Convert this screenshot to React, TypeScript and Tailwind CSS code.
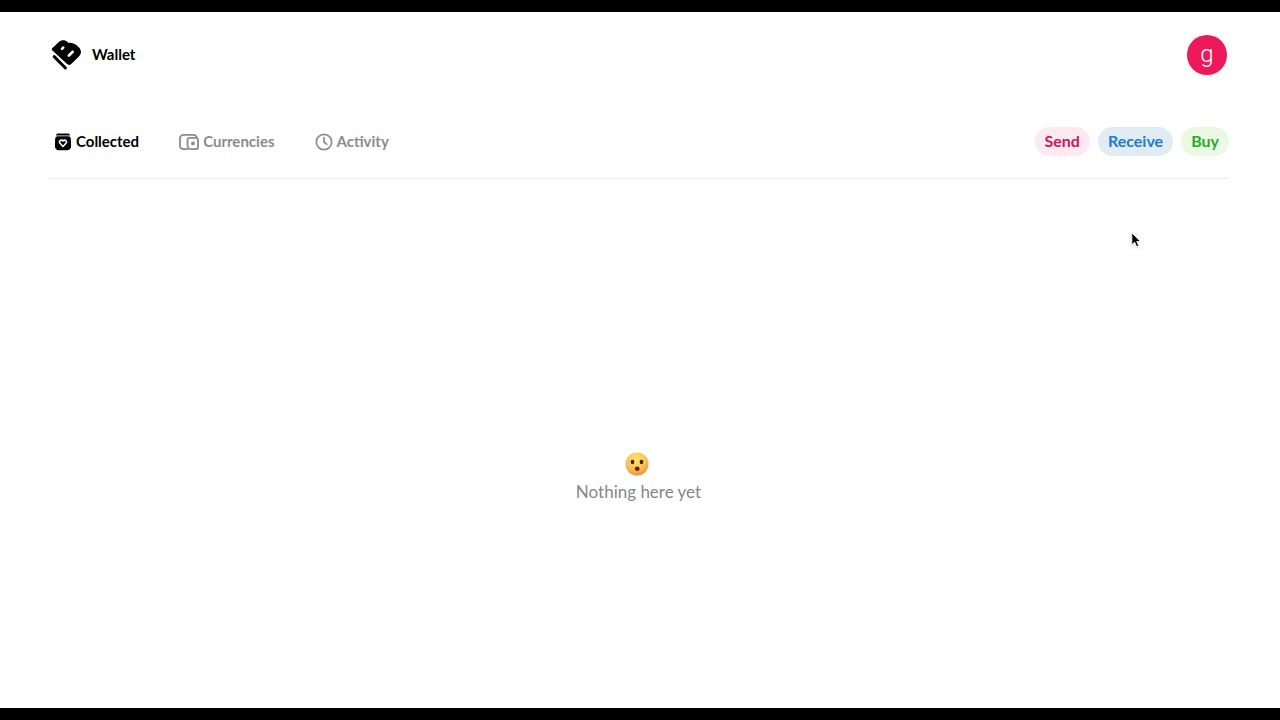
import React from "react";

function LogoMark() {
  return (
    <svg viewBox="0 0 36 36" className="size-9" aria-hidden="true">
      <path
        fill="#000"
        fillRule="evenodd"
        d="M4.2 11.200 L10.8 4.900 C13.4 2.700 17.200 2.700 19.600 5 L20.400 5.900 C22.800 5.200 25.800 6 28.600 8.200 L30.800 10.200 C33.600 13 33.700 16.600 31 19.400 L23.200 27 C21.800 28.300 20.200 28.200 18.800 26.800 L4.400 13.600 C3.600 12.800 3.600 11.900 4.200 11.200 Z M13.100 11 L14.400 9.700 C15.800 8.700 17.200 10.200 16.200 11.500 L14.900 12.800 C13.500 13.800 12.100 12.400 13.100 11 Z M19.900 17.600 L23.600 13.900 C25.100 12.700 26.700 14.300 25.600 15.800 L21.900 19.500 C20.400 20.700 18.700 19.100 19.900 17.600 Z"
      />
      <path d="M6.200 19.600 L17.400 31" stroke="#000" strokeWidth="3" strokeLinecap="round" fill="none" />
    </svg>
  );
}

function CollectedIcon() {
  return (
    <svg viewBox="0 0 18 18" className="size-[18px]" aria-hidden="true">
      <path fill="#000" d="M4.500.5h9c1.300 0 2 .5 2.300 1.400l.2.700H2l.2-.7C2.500 1 3.200.5 4.500.5Z" />
      <path fill="#000" d="M3.700 3.200h10.600a2.500 2.500 0 0 1 2.500 2.300l.3 7.300a4 4 0 0 1-4 4.400H4.900a4 4 0 0 1-4-4.400l.3-7.300a2.500 2.500 0 0 1 2.500-2.300Z" />
      <path
        d="M9 13.400 6 10.300C4.400 8.500 7 5.900 9 7.900c2-2 4.600.6 3 2.400L9 13.400Z"
        fill="none"
        stroke="#fff"
        strokeWidth="1.500"
        strokeLinejoin="round"
      />
    </svg>
  );
}

function CurrenciesIcon() {
  return (
    <svg viewBox="0 0 20 18" className="h-[18px] w-5" fill="none" stroke="#8a8c8e" strokeWidth="1.800" aria-hidden="true">
      <path d="M8.500 16.200h-4A3.500 3.500 0 0 1 1 12.700V5.300a3.500 3.500 0 0 1 3.500-3.500h10a3.500 3.500 0 0 1 3.300 2.700" strokeLinecap="round" />
      <path d="M10.500 4.800h6.200a2.300 2.300 0 0 1 2.300 2.300v6.800a2.300 2.300 0 0 1-2.300 2.300h-4.200a4 4 0 0 1-4-4V6.800a2 2 0 0 1 2-2Z" />
      <circle cx="14" cy="10.400" r="1.900" fill="#8a8c8e" stroke="none" />
    </svg>
  );
}

function ActivityIcon() {
  return (
    <svg viewBox="0 0 18 18" className="size-[18px]" fill="none" stroke="#8a8c8e" strokeWidth="1.700" strokeLinecap="round" strokeLinejoin="round" aria-hidden="true">
      <circle cx="9" cy="9" r="7.700" />
      <path d="M9 4.500V9l2.800 2.300" />
    </svg>
  );
}

function SurprisedFace() {
  return (
    <svg viewBox="0 0 24 24" className="mr-1 size-6" role="img" aria-label="Surprised face">
      <defs>
        <radialGradient id="face" cx="0.450" cy="0.300" r="0.750">
          <stop offset="0" stopColor="#ffe373" />
          <stop offset="0.550" stopColor="#fdc456" />
          <stop offset="1" stopColor="#f2873d" />
        </radialGradient>
      </defs>
      <circle cx="12" cy="12" r="11.500" fill="url(#face)" />
      <ellipse cx="7.500" cy="10" rx="1.800" ry="2.200" fill="#40240c" />
      <ellipse cx="16.500" cy="10" rx="1.800" ry="2.200" fill="#40240c" />
      <ellipse cx="12.200" cy="16.800" rx="2.400" ry="2.200" fill="#6b210b" />
    </svg>
  );
}

function Pointer() {
  return (
    <svg viewBox="0 0 12 18" className="pointer-events-none absolute top-[219px] left-[1130px] h-[18px] w-3 drop-shadow-sm" aria-hidden="true">
      <path d="M1.800 1.800v12l2.800-2.500 2 4.400 2.200-1-2-4.200h3.800Z" fill="#000" stroke="#fff" strokeWidth="0.900" />
    </svg>
  );
}

export default function App() {
  return (
    <div className="relative flex min-h-screen flex-col border-y-12 border-black bg-white pr-[51px] pl-12 font-['Lato',sans-serif] text-base leading-5">
      <header className="flex items-center justify-between pt-[23px]">
        <a href="#" className="flex items-center gap-2 text-[15px] font-bold text-black">
          <LogoMark />
          <span className="pb-0.5">Wallet</span>
        </a>
        <button type="button" aria-label="Account" className="mr-0.5 flex size-10 items-center justify-center rounded-full bg-[#ec1a5b] pb-0.5 font-['Roboto',sans-serif] text-2xl font-light text-white shadow-[0_0_12px_rgba(0,0,0,0.06)]">
          g
        </button>
      </header>

      <div className="mt-[52px] flex items-center justify-between border-b border-[#ececec] pb-[22px]">
        <nav className="flex items-center gap-10 pl-1.5 text-[15px] font-bold text-[#8a8c8e]">
          <a href="#collected" aria-current="page" className="flex items-center gap-1 text-black">
            <CollectedIcon />
            <span className="pb-0.5">Collected</span>
          </a>
          <a href="#currencies" className="flex items-center gap-1">
            <CurrenciesIcon />
            <span className="pb-0.5">Currencies</span>
          </a>
          <a href="#activity" className="flex items-center gap-1">
            <ActivityIcon />
            <span className="pb-0.5">Activity</span>
          </a>
        </nav>
        <div className="flex gap-2 font-bold">
          <button type="button" className="rounded-full bg-[#fde9f0] px-2.5 pt-1 pb-[5px] text-[#c8175a]">Send</button>
          <button type="button" className="rounded-full bg-[#e0ebf4] px-2.5 pt-1 pb-[5px] text-[#2479d0]">Receive</button>
          <button type="button" className="rounded-full bg-[#eaf8e4] px-2.5 pt-1 pb-[5px] text-[#1eae1e]">Buy</button>
        </div>
      </div>

      <main className="flex flex-1 flex-col items-center justify-center gap-1.5 pt-[66px] text-[#85878a]">
        <SurprisedFace />
        <p className="text-[17px] leading-5">Nothing here yet</p>
      </main>
      <Pointer />
    </div>
  );
}
